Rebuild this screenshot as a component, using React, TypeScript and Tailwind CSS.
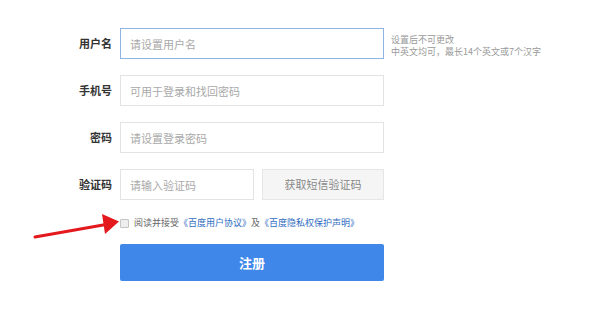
import React from "react";

const font = { fontFamily: '"Noto Sans CJK SC", "Noto Sans", sans-serif' };

const Row = ({ label, children }: { label: string; children: React.ReactNode }) => (
  <div className="flex items-center h-[31px]">
    <label className="w-[112px] text-right text-[11px] font-bold text-[#333]">{label}</label>
    <div className="ml-2 flex items-center">{children}</div>
  </div>
);

const App = () => {
  return (
    <div className="relative w-[600px] h-[311px] bg-white overflow-hidden" style={font}>
      <div className="flex flex-col pt-[28px] gap-4">
        <Row label="用户名">
          <input
            className="w-[264px] h-[31px] border border-[#8fb4e3] px-[9px] text-[11px] outline-none placeholder:text-[#a9a9a9]"
            placeholder="请设置用户名"
          />
          <div className="ml-[7px] text-[9px] leading-[12px] text-[#999] mt-[4px]">
            <p>设置后不可更改</p>
            <p>中英文均可，最长14个英文或7个汉字</p>
          </div>
        </Row>
        <Row label="手机号">
          <input
            className="w-[264px] h-[31px] border border-[#e3e3e3] px-[9px] text-[11px] outline-none placeholder:text-[#a9a9a9]"
            placeholder="可用于登录和找回密码"
          />
        </Row>
        <Row label="密码">
          <input
            className="w-[264px] h-[31px] border border-[#e3e3e3] px-[9px] text-[11px] outline-none placeholder:text-[#a9a9a9]"
            placeholder="请设置登录密码"
          />
        </Row>
        <Row label="验证码">
          <input
            className="w-[134px] h-[31px] border border-[#e3e3e3] px-[9px] text-[11px] outline-none placeholder:text-[#a9a9a9]"
            placeholder="请输入验证码"
          />
          <button className="ml-2 w-[122px] h-[31px] border border-[#e6e6e6] bg-[#f5f5f5] text-[11px] text-[#888]">
            获取短信验证码
          </button>
        </Row>
      </div>

      <div className="flex items-center ml-[120px] mt-[18px] h-[10px]">
        <span className="w-[9px] h-[9px] border border-[#c4c4c4] bg-[#eeeeee] rounded-[1px]" />
        <span className="ml-[5px] text-[9px] text-[#666] whitespace-nowrap">
          阅读并接受<span className="text-[#2f6dc2]">《百度用户协议》</span>及<span className="text-[#2f6dc2]">《百度隐私权保护声明》</span>
        </span>
      </div>

      <button className="ml-[120px] mt-[16px] w-[264px] h-[37px] rounded-[2px] bg-[#3f88ea] text-white text-[13px] font-bold">
        注册
      </button>

      <svg className="absolute left-0 top-0" width="600" height="311" viewBox="0 0 600 311">
        <line x1="35" y1="237" x2="106" y2="224.5" stroke="#e3191e" strokeWidth="3" strokeLinecap="round" />
        <polygon points="102,214 119,221.5 105,234" fill="#e3191e" />
      </svg>
    </div>
  );
};

export default App;
